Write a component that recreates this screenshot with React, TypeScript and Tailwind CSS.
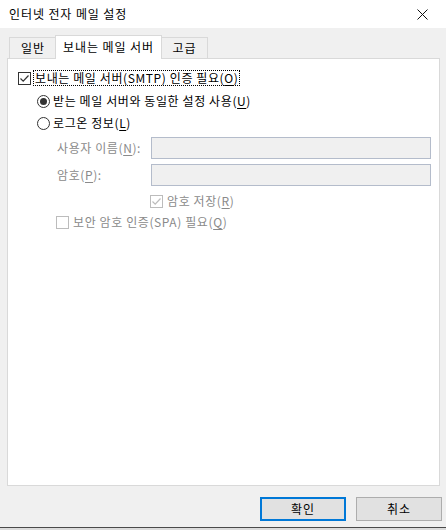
import React from "react";

const font = { fontFamily: '"Noto Sans CJK KR", "Noto Sans", sans-serif' };

function U({ c }: { c: string }) {
  return <span className="underline underline-offset-[2px]">{c}</span>;
}

function CheckBox({ checked, disabled }: { checked?: boolean; disabled?: boolean }) {
  const col = disabled ? "#bcbcbc" : "#333333";
  return (
    <div
      className="w-[13px] h-[13px] bg-white border flex items-center justify-center shrink-0"
      style={{ borderColor: col }}
    >
      {checked && (
        <svg width="11" height="11" viewBox="0 0 11 11">
          <path d="M1.5 5.5 L4.2 8.2 L9.5 2.5" fill="none" stroke={col} strokeWidth="1.2" />
        </svg>
      )}
    </div>
  );
}

function Radio({ checked }: { checked?: boolean }) {
  return (
    <div className="w-[13px] h-[13px] rounded-full bg-white border border-[#333333] flex items-center justify-center shrink-0">
      {checked && <div className="w-[7px] h-[7px] rounded-full bg-[#333333]" />}
    </div>
  );
}

export default function App() {
  return (
    <div className="w-[446px] h-[530px] bg-[#f0f0f0] flex flex-col overflow-hidden text-[12px] text-black tracking-[0.6px]" style={font}>
      <div className="h-[28px] bg-white flex items-center justify-between pl-[9px] pr-[18px] shrink-0">
        <span className="leading-[16px] tracking-[0.9px]">인터넷 전자 메일 설정</span>
        <svg width="11" height="11" viewBox="0 0 11 11">
          <path d="M0.5 0.5 L10.5 10.5 M10.5 0.5 L0.5 10.5" stroke="#111" strokeWidth="1" />
        </svg>
      </div>

      <div className="flex pl-[7px] pt-[7px] items-end relative z-10 shrink-0 tracking-[0.9px]">
        <div className="h-[21px] w-[48px] border border-b-0 border-[#d9d9d9] bg-[#f0f0f0] flex items-center justify-center mb-0 ml-[2px] mr-[-2px] leading-[14px]">
          일반
        </div>
        <div className="h-[24px] w-[107px] border border-b-0 border-[#d9d9d9] bg-white flex items-center justify-center mb-[-1px] leading-[14px] pb-[2px]">
          보내는 메일 서버
        </div>
        <div className="h-[21px] w-[46px] border border-b-0 border-l-0 border-[#d9d9d9] bg-[#f0f0f0] flex items-center justify-center leading-[14px]">
          고급
        </div>
      </div>

      <div className="ml-[7px] w-[433px] h-[428px] bg-white border border-[#d9d9d9] flex flex-col shrink-0 leading-[14px]">
        <div className="mt-[11px] h-[16px] flex items-center pl-[10px]">
          <CheckBox checked />
          <div className="ml-[2px] h-[16px] px-[1px] flex items-center border border-dotted border-black">
            보내는 메일 서버(SMTP) 인증 필요(<U c="O" />)
          </div>
        </div>
        <div className="mt-[7px] h-[16px] flex items-center pl-[29px]">
          <Radio checked />
          <span className="ml-[3px]">
            받는 메일 서버와 동일한 설정 사용(<U c="U" />)
          </span>
        </div>
        <div className="mt-[6px] h-[16px] flex items-center pl-[29px]">
          <Radio />
          <span className="ml-[3px]">
            로그온 정보(<U c="L" />)
          </span>
        </div>
        <div className="mt-[6px] h-[22px] flex items-center pl-[49px] text-[#8a8a8a]">
          <span className="w-[94px]">
            사용자 이름(<U c="N" />):
          </span>
          <div className="w-[280px] h-[22px] border border-[#b4bccb] bg-[#f0f0f0]" />
        </div>
        <div className="mt-[5px] h-[22px] flex items-center pl-[49px] text-[#8a8a8a]">
          <span className="w-[94px]">
            암호(<U c="P" />):
          </span>
          <div className="w-[280px] h-[22px] border border-[#b4bccb] bg-[#f0f0f0]" />
        </div>
        <div className="mt-[7px] h-[16px] flex items-center pl-[142px] text-[#8a8a8a]">
          <CheckBox checked disabled />
          <span className="ml-[4px]">
            암호 저장(<U c="R" />)
          </span>
        </div>
        <div className="mt-[5px] h-[16px] flex items-center pl-[48px] text-[#8a8a8a]">
          <CheckBox disabled />
          <span className="ml-[4px]">
            보안 암호 인증(SPA) 필요(<U c="Q" />)
          </span>
        </div>
      </div>

      <div className="flex justify-end gap-[10px] pr-[4px] mt-[11px] shrink-0 tracking-[0.9px]">
        <button className="w-[86px] h-[24px] bg-[#e1e1e1] border-2 border-[#0078d7] flex items-center justify-center leading-[14px]">
          확인
        </button>
        <button className="w-[86px] h-[24px] bg-[#e1e1e1] border border-[#adadad] flex items-center justify-center leading-[14px]">
          취소
        </button>
      </div>

      <div className="mt-auto h-[3px] border-t border-[#4a4a4a] bg-[#dcdcdc] shrink-0" />
    </div>
  );
}
